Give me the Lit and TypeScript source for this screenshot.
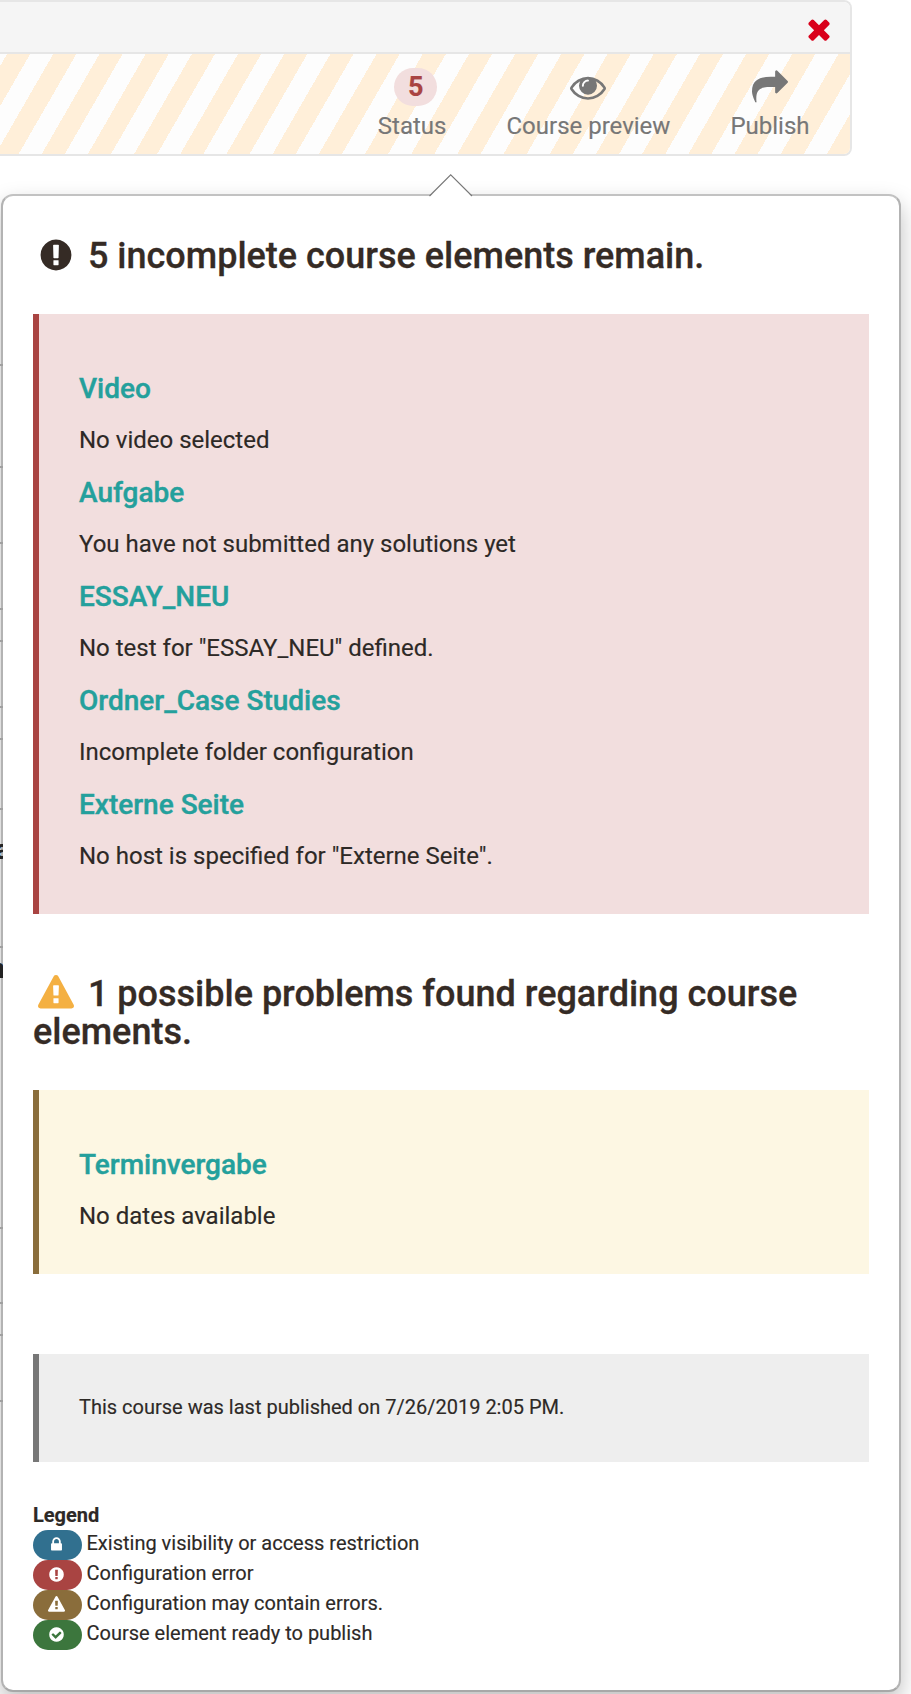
import { LitElement, html, css, svg } from "lit";
import { customElement, property } from "lit/decorators.js";

const ICONS: Record<string, string> = {
  error:
    "M896 128q209 0 385.5 103t279.5 279.5 103 385.5-103 385.5-279.5 279.5-385.5 103-385.5-103-279.5-279.5-103-385.5 103-385.5 279.5-279.5 385.5-103zm128 1247v-190q0-14-9-23.5t-22-9.5h-192q-13 0-23 10t-10 23v190q0 13 10 23t23 10h192q13 0 22-9.5t9-23.5zm-2-344l18-621q0-12-10-18-10-8-24-8h-220q-14 0-24 8-10 6-10 18l17 621q0 10 10 17.5t24 7.5h185q14 0 23.5-7.5t10.5-17.5z",
  warning:
    "M1024 1375v-190q0-14-9.5-23.5t-22.5-9.5h-192q-13 0-22.5 9.5t-9.5 23.5v190q0 14 9.5 23.5t22.5 9.5h192q13 0 22.5-9.5t9.5-23.5zm-2-374l18-459q0-12-10-19-13-11-24-11h-220q-11 0-24 11-10 7-10 21l17 457q0 10 10 16.5t24 6.5h185q14 0 23.5-6.5t10.5-16.5zm-14-934l768 1408q35 63-2 126-17 29-46.5 46t-63.5 17h-1536q-34 0-63.5-17t-46.5-46q-37-63-2-126l768-1408q17-31 47-49t65-18 65 18 47 49z",
  lock: "M640 768h512v-192q0-106-75-181t-181-75-181 75-75 181v192zm832 96v576q0 40-28 68t-68 28h-960q-40 0-68-28t-28-68v-576q0-40 28-68t68-28h32v-192q0-184 132-316t316-132 316 132 132 316v192h32q40 0 68 28t28 68z",
  check:
    "M1412 734q0-28-18-46l-91-90q-19-19-45-19t-45 19l-408 407-226-226q-19-19-45-19t-45 19l-91 90q-18 18-18 46 0 27 18 45l362 362q19 19 45 19 27 0 46-19l543-543q18-18 18-45zm252 162q0 209-103 385.5t-279.5 279.5-385.5 103-385.5-103-279.5-279.5-103-385.5 103-385.5 279.5-279.5 385.5-103 385.5 103 279.5 279.5 103 385.5z",
  close:
    "M1490 1322q0 40-28 68l-136 136q-28 28-68 28t-68-28l-294-294-294 294q-28 28-68 28t-68-28l-136-136q-28-28-28-68t28-68l294-294-294-294q-28-28-28-68t28-68l136-136q28-28 68-28t68 28l294 294 294-294q28-28 68-28t68 28l136 136q28 28 28 68t-28 68l-294 294 294 294q28 28 28 68z",
  eye: "M1664 960q-152-236-381-353 61 104 61 225 0 185-131.5 316.5t-316.5 131.5-316.5-131.5-131.5-316.5q0-121 61-225-229 117-381 353 133 205 333.5 326.5t434.5 121.5 434.5-121.5 333.5-326.5zm-720-384q0-20-14-34t-34-14q-125 0-214.5 89.5t-89.5 214.5q0 20 14 34t34 14 34-14 14-34q0-86 61-147t147-61q20 0 34-14t14-34zm848 384q0 34-20 69-140 230-376.5 368.5t-499.5 138.5-499.5-139-376.5-368q-20-35-20-69t20-69q140-229 376.5-368t499.5-139 499.5 139 376.5 368q20 35 20 69z",
  share:
    "M1792 640q0 26-19 45l-512 512q-19 19-45 19t-45-19-19-45v-256h-224q-98 0-175.5 6t-154 21.5-133 42.5-105.5 69.5-80 101-48.5 138.5-17.5 181q0 55 5 123 0 6 2.5 23.5t2.5 26.5q0 15-8.5 25t-23.5 10q-16 0-28-17-7-9-13-22t-13.5-30-10.5-24q-127-285-127-451 0-199 53-333 162-403 875-403h224v-256q0-26 19-45t45-19 45 19l512 512q19 19 19 45z",
};

@customElement("fa-icon")
class FaIcon extends LitElement {
  static styles = css`
    :host { display: block; width: 1em; height: 1em; }
    svg { display: block; width: 100%; height: 100%; overflow: visible; fill: currentColor; }
  `;
  @property() name = "error";
  render() {
    return html`<svg viewBox="0 0 1792 1792">${svg`<path d=${ICONS[this.name]}></path>`}</svg>`;
  }
}

const ERRORS = [
  ["Video", "No video selected"],
  ["Aufgabe", "You have not submitted any solutions yet"],
  ["ESSAY_NEU", 'No test for "ESSAY_NEU" defined.'],
  ["Ordner_Case Studies", "Incomplete folder configuration"],
  ["Externe Seite", 'No host is specified for "Externe Seite".'],
];
const WARNINGS = [["Terminvergabe", "No dates available"]];
const LEGEND = [
  ["lock", "restricted", "Existing visibility or access restriction"],
  ["error", "failed", "Configuration error"],
  ["warning", "suspect", "Configuration may contain errors."],
  ["check", "ready", "Course element ready to publish"],
];
/* heights of the table rows that show left of the popover */
const ROWS: [number, string][] = [
  [366, ""], [102, ""], [76, ""], [66, ""], [32, ""], [66, ""], [32, ""], [70, ""],
  [138, "a"], [281, "n"], [75, ""], [32, ""], [66, ""],
];

@customElement("app-root")
class AppRoot extends LitElement {
  static styles = css`
    :host {
      display: block; position: relative; width: 911px; height: 1694px; overflow: hidden;
      background: #fff; color: #2d2926; font-family: Roboto, sans-serif; font-size: 24px;
      -webkit-text-stroke: 0.15px currentColor;
    }
    * { box-sizing: border-box; }
    h3, h4, p { margin: 0; }
    .toolbar {
      width: 852px; height: 156px; border: 2px solid #e6e6e6; border-left: 0;
      border-radius: 0 8px 8px 0; display: flex; flex-direction: column; overflow: hidden;
    }
    .titlebar {
      flex: 0 0 52px; height: 52px; border-bottom: 2px solid #e6e6e6; background: #f5f5f5;
      display: flex; justify-content: flex-end; padding: 11px 15px 0 0;
    }
    .close { font-size: 32px; color: #d9001b; }
    .tools {
      flex: 1; display: flex; justify-content: flex-end; gap: 60px; padding: 14px 40.5px 0 0; color: #777;
      background: repeating-linear-gradient(-60deg, #ffefd9 0 20px, #fdfdfd 20px 40px);
    }
    .tool { display: flex; flex-direction: column; align-items: center; }
    .pic { height: 44px; display: flex; align-items: flex-start; font-size: 36px; }
    .eye { margin-top: 1px; }
    .share { margin-top: 1px; }
    .label { line-height: 28px; }
    .badge {
      width: 43px; height: 38px; border-radius: 20px; margin-left: 7px; background: #f2dede;
      color: #a94442; font-size: 27px; font-weight: 700; line-height: 39px; text-align: center;
    }
    .popover {
      position: relative; width: 900px; height: 1498px; margin: 38px 0 0 1px; padding: 40px 30px;
      border: 2px solid #b3b3b3; border-top-color: #c2c2c2; border-bottom-color: #a8a8a8;
      border-radius: 12px; background: #fff; box-shadow: 0 10px 22px rgba(0, 0, 0, 0.25);
    }
    .arrow { position: absolute; left: 425px; top: -23px; width: 46px; height: 24px; }
    .heading {
      font-size: 36px; line-height: 38px; font-weight: 500; color: #352b25;
      padding-top: 1px; margin-bottom: -1px; -webkit-text-stroke: 0.3px currentColor;
    }
    .heading + .box { margin-top: 40px; }
    .hicon {
      display: inline-flex; justify-content: center; width: 45px; height: 36px; margin-right: 1px;
      vertical-align: top;
    }
    .hicon.warn { color: #f4b042; padding-left: 1px; }
    .box { border-left: 6px solid; padding: 60px 40px 20px; }
    .box.error { background: #f2dede; border-color: #a94442; }
    .box.warning { background: #fdf7e3; border-color: #8a6d3b; }
    .box.note { background: #eee; border-color: #777; padding: 39px 40px 41px; margin-top: 80px; font-size: 20px; line-height: 28px; }
    .box.error + .heading { margin-top: 60px; }
    .name {
      font-size: 28px; line-height: 30px; font-weight: 500; color: #24a09c; margin-bottom: 22px;
      -webkit-text-stroke: 0.4px currentColor;
    }
    .text { line-height: 28px; margin-bottom: 24px; }
    .text:last-child { margin-bottom: 26px; }
    .box.error, .box.warning { padding-bottom: 18px; }
    .legend { margin-top: 38px; font-size: 20px; }
    .legend-title { font-weight: 700; line-height: 30px; }
    .entry { display: flex; gap: 4.5px; height: 30px; line-height: 26px; }
    .pill {
      width: 49px; height: 30px; border-radius: 15px; display: flex; justify-content: center;
      padding: 6px 2px 0 0; font-size: 17px; color: #fff;
    }
    .restricted { background: #31708f; }
    .failed { background: #a94442; }
    .suspect { background: #8a6d3b; }
    .ready { background: #3c763d; }
    .behind { position: absolute; left: 0; top: 0; width: 3px; display: flex; flex-direction: column; }
    .row {
      flex: none; width: 3px; border-bottom: 2px solid #a0a0a0; overflow: hidden;
      display: flex; flex-direction: column; align-items: flex-end;
      font-size: 28px; line-height: 32px; font-weight: 700; color: #222;
    }
    .row.a { padding-top: 24px; }
    .row.a span { margin-right: -7px; }
    .row.n { padding-top: 5px; }
    .row.n span { margin-right: -2px; }
  `;

  private items(list: string[][]) {
    return list.map(([name, text]) => html`<h4 class="name">${name}</h4><p class="text">${text}</p>`);
  }

  render() {
    return html`
      <header class="toolbar">
        <div class="titlebar"><fa-icon class="close" name="close"></fa-icon></div>
        <nav class="tools">
          <div class="tool"><div class="pic"><span class="badge">5</span></div><span class="label">Status</span></div>
          <div class="tool"><div class="pic"><fa-icon class="eye" name="eye"></fa-icon></div><span class="label">Course preview</span></div>
          <div class="tool"><div class="pic"><fa-icon class="share" name="share"></fa-icon></div><span class="label">Publish</span></div>
        </nav>
      </header>
      <main class="popover">
        <svg class="arrow" viewBox="0 0 46 24">
          <path d="M1.5 24 L22.7 1.8 L44 24 Z" fill="#fff"></path>
          <path d="M1.5 23 L22.7 1.8 L44 23" fill="none" stroke="#777" stroke-width="1.1"></path>
        </svg>
        <h3 class="heading"><span class="hicon"><fa-icon name="error"></fa-icon></span> 5 incomplete course elements remain.</h3>
        <section class="box error">${this.items(ERRORS)}</section>
        <h3 class="heading"><span class="hicon warn"><fa-icon name="warning"></fa-icon></span> 1 possible problems found regarding course elements.</h3>
        <section class="box warning">${this.items(WARNINGS)}</section>
        <section class="box note">This course was last published on 7/26/2019 2:05 PM.</section>
        <section class="legend">
          <div class="legend-title">Legend</div>
          ${LEGEND.map(([icon, kind, text]) => html`
            <div class="entry"><span class="pill ${kind}"><fa-icon name=${icon}></fa-icon></span><span>${text}</span></div>`)}
        </section>
      </main>
      <div class="behind">
        ${ROWS.map(([h, t]) => html`<div class="row ${t}" style="height:${h}px">${t ? html`<span>${t}</span>` : ""}</div>`)}
      </div>
    `;
  }
}
